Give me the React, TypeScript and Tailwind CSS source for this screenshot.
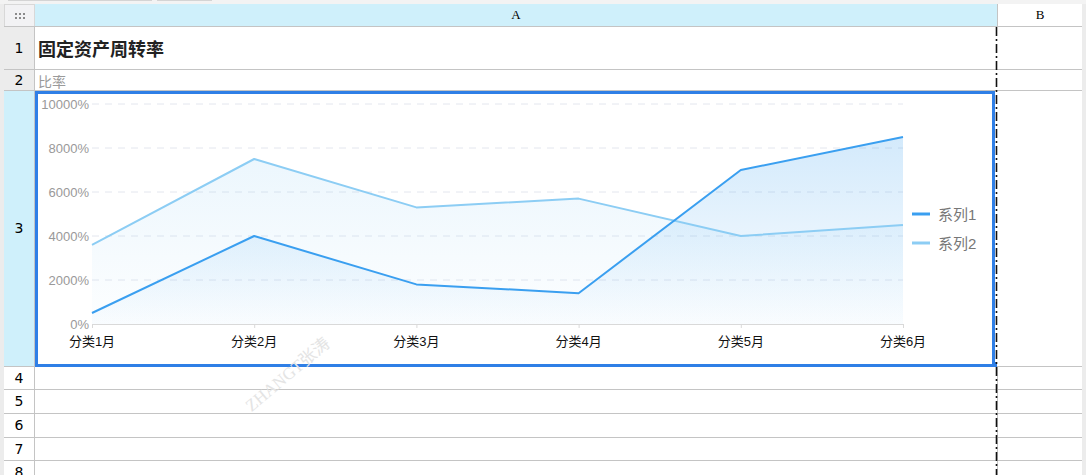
import React from "react";

const cats = ["分类1月", "分类2月", "分类3月", "分类4月", "分类5月", "分类6月"];
const s1 = [500, 4000, 1800, 1400, 7000, 8500];
const s2 = [3600, 7500, 5300, 5700, 4000, 4500];

// chart geometry in page pixels, shifted into the cell below
const X0 = 92;
const X1 = 903;
const BASE = 324;
const TOP = 104;
const xAt = (i: number) => X0 + ((X1 - X0) / 5) * i;
const yAt = (v: number) => BASE - ((BASE - TOP) * v) / 10000;

function linePath(data: number[]) {
  return data.map((v, i) => `${i === 0 ? "M" : "L"}${xAt(i)},${yAt(v)}`).join(" ");
}
function areaPath(data: number[]) {
  return `${linePath(data)} L${X1},${BASE} L${X0},${BASE} Z`;
}

function Chart() {
  const ticks = [0, 2000, 4000, 6000, 8000, 10000];
  return (
    <svg className="absolute inset-0" width={961} height={276} viewBox="35 91 961 276">
      <defs>
        <linearGradient id="g1" gradientUnits="userSpaceOnUse" x1="0" y1={TOP} x2="0" y2={BASE}>
          <stop offset="0" stopColor="#3ba0f0" stopOpacity="0.26" />
          <stop offset="1" stopColor="#3ba0f0" stopOpacity="0.02" />
        </linearGradient>
        <linearGradient id="g2" gradientUnits="userSpaceOnUse" x1="0" y1={TOP} x2="0" y2={BASE}>
          <stop offset="0" stopColor="#8fcdf4" stopOpacity="0.22" />
          <stop offset="1" stopColor="#8fcdf4" stopOpacity="0.02" />
        </linearGradient>
      </defs>
      {ticks.map((t) => (
        <g key={t}>
          {t > 0 && (
            <line x1={X0} x2={X1} y1={yAt(t)} y2={yAt(t)} stroke="#e3e6ee" strokeDasharray="7 6" />
          )}
          <text
            x={89}
            y={yAt(t) + 4.5}
            textAnchor="end"
            fontSize="13"
            fill="#999"
            fontFamily="'Liberation Sans', Arial, sans-serif"
          >
            {t}%
          </text>
        </g>
      ))}
      <path d={areaPath(s2)} fill="url(#g2)" />
      <path d={areaPath(s1)} fill="url(#g1)" />
      <line x1={X0} x2={X1} y1={BASE + 0.5} y2={BASE + 0.5} stroke="#d9d9d9" />
      {cats.map((c, i) => (
        <g key={c}>
          <line x1={xAt(i) + 0.5} x2={xAt(i) + 0.5} y1={BASE} y2={BASE + 4} stroke="#d9d9d9" />
          <text
            x={xAt(i)}
            y={346}
            textAnchor="middle"
            fontSize="13"
            fill="#111"
            fontFamily="'Liberation Sans', 'Noto Sans CJK SC', sans-serif"
          >
            {c}
          </text>
        </g>
      ))}
      <path d={linePath(s2)} fill="none" stroke="#8ccdf4" strokeWidth="2" strokeLinejoin="round" />
      <path d={linePath(s1)} fill="none" stroke="#3a9ff0" strokeWidth="2" strokeLinejoin="round" />
      <line x1={912} x2={930} y1={214} y2={214} stroke="#3a9ff0" strokeWidth="3" />
      <text x={938} y={219.5} fontSize="15" fill="#777" fontFamily="'Liberation Sans', 'Noto Sans CJK SC', sans-serif">
        系列1
      </text>
      <line x1={912} x2={930} y1={243} y2={243} stroke="#8ccdf4" strokeWidth="3" />
      <text x={938} y={248.5} fontSize="15" fill="#777" fontFamily="'Liberation Sans', 'Noto Sans CJK SC', sans-serif">
        系列2
      </text>
    </svg>
  );
}

function RowHead({ n, className = "" }: { n?: number; className?: string }) {
  return (
    <div
      className={`w-[31px] shrink-0 flex items-center justify-center border-r border-[#c4c4c4] text-[14px] text-black font-['DejaVu_Sans',sans-serif] ${className}`}
    >
      {n}
    </div>
  );
}

export default function App() {
  const plainRows = [
    { n: 4, h: "h-[23px]" },
    { n: 5, h: "h-[24px]" },
    { n: 6, h: "h-[24px]" },
    { n: 7, h: "h-[23px]" },
    { n: 8, h: "h-[23px]" },
  ];

  return (
    <div className="relative w-[1086px] h-[475px] overflow-hidden bg-[#ececec] font-['Noto_Sans_CJK_SC',sans-serif]">
      {/* tab strip */}
      <div className="h-[4px] bg-[#f3f3f3] flex gap-[5px] pl-[8px]">
        <div className="w-[144px] h-[1px] bg-[#d4d4d4]" />
        <div className="w-[55px] h-[1px] bg-[#d4d4d4]" />
      </div>

      <div className="pl-[4px] pr-[4px]">
        {/* column header */}
        <div className="flex h-[23px] border-b border-[#c4c4c4]">
          <div className="w-[31px] shrink-0 bg-[#f2f2f4] border-r border-l border-t border-[#d8d8d8] flex items-center justify-center">
            <div className="grid grid-cols-3 gap-[2px]">
              {Array.from({ length: 6 }).map((_, i) => (
                <div key={i} className="w-[2px] h-[2px] bg-[#8a8a8a]" />
              ))}
            </div>
          </div>
          <div className="w-[962px] shrink-0 bg-[#cff0fb] flex items-center justify-center text-[13px] font-['Liberation_Serif',serif]">
            A
          </div>
          <div className="flex-1 bg-white border-l border-[#c4c4c4] flex items-center justify-center text-[13px] font-['Liberation_Serif',serif]">
            B
          </div>
        </div>

        {/* row 1 */}
        <div className="flex h-[43px] border-b border-[#c4c4c4] bg-white">
          <RowHead n={1} className="bg-[#ececec]" />
          <div className="w-[962px] shrink-0 flex items-center pl-[3px] pt-[1px] text-[18px] font-bold text-[#222]">
            固定资产周转率
          </div>
          <div className="flex-1" />
        </div>

        {/* row 2 */}
        <div className="flex h-[21px] border-b border-[#c4c4c4] bg-white">
          <RowHead n={2} className="bg-[#ececec]" />
          <div className="w-[962px] shrink-0 flex items-center pl-[3px] pt-[2px] text-[14px] text-[#9a9a9a]">
            比率
          </div>
          <div className="flex-1" />
        </div>

        {/* row 3 with chart */}
        <div className="flex h-[276px] border-b border-[#c4c4c4] bg-white">
          <RowHead n={3} className="bg-[#cff0fb]" />
          <div className="relative w-[962px] shrink-0">
            <Chart />
            <div className="absolute left-0 top-0 w-[960px] h-[276px] border-[3px] border-[#2f7fe6] pointer-events-none" />
            <div className="absolute left-[957px] top-[271px] w-[5px] h-[5px] bg-[#2f7fe6]" />
          </div>
          <div className="flex-1" />
        </div>

        {plainRows.map((r) => (
          <div key={r.n} className={`flex ${r.h} border-b border-[#c4c4c4] bg-white`}>
            <RowHead n={r.n} className="bg-white" />
            <div className="w-[962px] shrink-0" />
            <div className="flex-1 border-l border-[#c4c4c4]" />
          </div>
        ))}
      </div>

      {/* page break line (dash-dot) */}
      <svg className="absolute left-[995px] top-[27px] pointer-events-none" width={3} height={448}>
        <line x1={1.5} x2={1.5} y1={0} y2={448} stroke="#111" strokeWidth="1.6" strokeDasharray="9 3 2 3" />
      </svg>

      {/* watermark */}
      <div className="absolute left-[236px] top-[362px] -rotate-[40deg] text-[17px] text-[#e4e4e4] font-['Liberation_Serif','Noto_Sans_CJK_SC',serif] whitespace-nowrap pointer-events-none">
        ZHANGT张涛
      </div>
    </div>
  );
}
